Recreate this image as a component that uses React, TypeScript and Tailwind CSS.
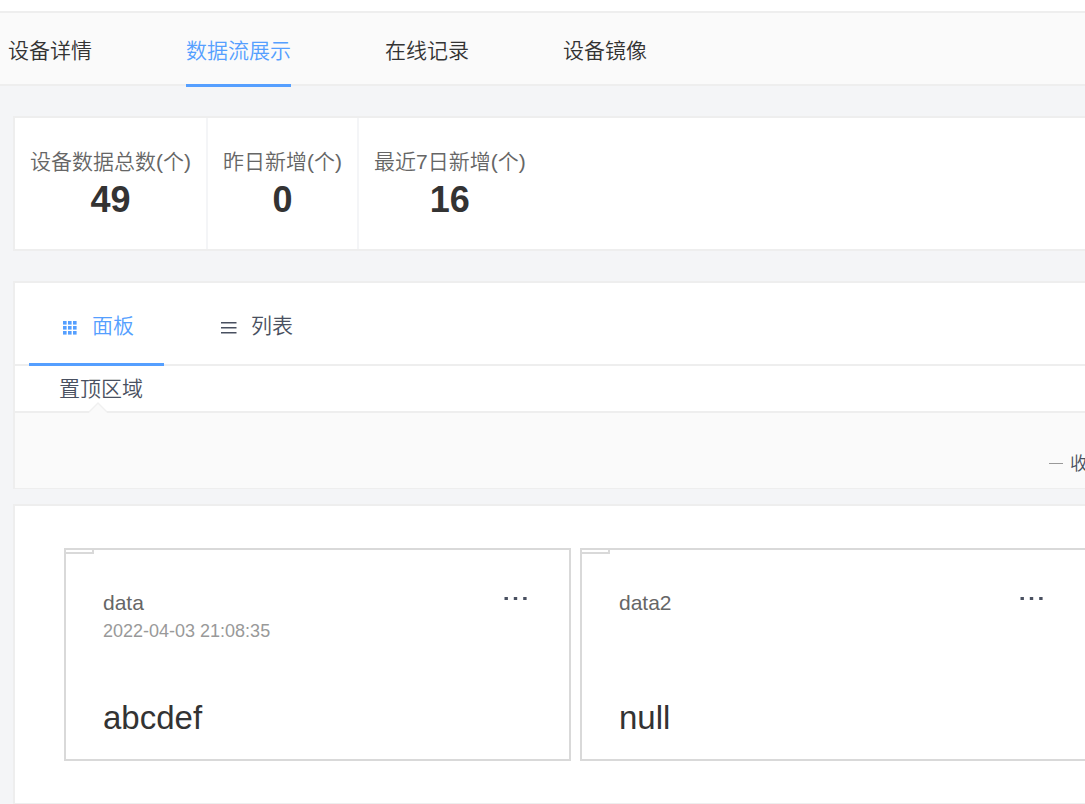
import { useState } from 'react';

const navTabs = ['设备详情', '数据流展示', '在线记录', '设备镜像'];

const stats = [
  { label: '设备数据总数(个)', value: 49 },
  { label: '昨日新增(个)', value: 0 },
  { label: '最近7日新增(个)', value: 16 },
];

const streams = [
  { name: 'data', time: '2022-04-03 21:08:35', value: 'abcdef' },
  { name: 'data2', time: '', value: 'null' },
];

function GridIcon() {
  const cells = [4, 9, 14];
  return (
    <svg width="21" height="21" viewBox="0 0 21 21" fill="currentColor" aria-hidden="true">
      {cells.map((y) => cells.map((x) => <rect key={`${x}-${y}`} x={x} y={y + 1} width="3.6" height="3.6" />))}
    </svg>
  );
}

function ListIcon() {
  return (
    <svg width="21" height="21" viewBox="0 0 21 21" fill="currentColor" aria-hidden="true">
      <rect x="3" y="6" width="15.5" height="1.5" />
      <rect x="3" y="11" width="15.5" height="1.5" />
      <rect x="3" y="16" width="15.5" height="1.5" />
    </svg>
  );
}

function DotsIcon() {
  return (
    <svg width="24" height="4" viewBox="0 0 24 4" fill="currentColor" aria-hidden="true">
      <rect x="0.5" y="0" width="3.4" height="3" />
      <rect x="9.8" y="0" width="3.4" height="3" />
      <rect x="19.2" y="0" width="3.4" height="3" />
    </svg>
  );
}

function StreamCard({ name, time, value }: { name: string; time: string; value: string }) {
  return (
    <article className="border-2 border-[#d9d9d9] bg-white">
      <div className="h-1 w-7 border-r-2 border-b-2 border-[#d9d9d9]" />
      <div className="px-[37px] pt-[35px] pb-[21px]">
        <div className="flex items-start justify-between">
          <h3 className="text-[21px] leading-7 text-[#666]">{name}</h3>
          <button type="button" aria-label="更多" className="mr-1 flex h-5 items-center text-[#495060]">
            <DotsIcon />
          </button>
        </div>
        <p className="h-7 text-[18px] leading-7 text-[#999]">{time}</p>
        <p className="mt-[53px] text-[33px] leading-10 text-[#333]">{value}</p>
      </div>
    </article>
  );
}

export default function App() {
  const [page, setPage] = useState('数据流展示');
  const [view, setView] = useState('panel');
  const [open, setOpen] = useState(true);

  const viewClass = (name: string) =>
    view === name
      ? 'border-[#559fff] text-[#559fff]'
      : 'border-transparent text-[#495060]';

  return (
    <div className="min-h-screen overflow-hidden bg-[#f4f5f7] font-['Liberation_Sans','Noto_Sans_CJK_SC',sans-serif] text-[21px] font-[350]">
      <div className="h-[11px] bg-white" />
      <nav className="flex gap-[94px] border-y-2 border-[#eee] bg-[#fafafa] pl-2">
        {navTabs.map((tab) => (
          <button
            key={tab}
            type="button"
            onClick={() => setPage(tab)}
            className={`-mb-[3px] h-[74px] shrink-0 border-b-[3px] pt-[5px] leading-8 ${
              page === tab ? 'border-[#559fff] text-[#559fff]' : 'border-transparent text-[#333]'
            }`}
          >
            {tab}
          </button>
        ))}
      </nav>

      {/* The content area runs past the right edge of the window. */}
      <main className="-mr-9 pt-[30px] pl-[13px]">
        <section className="flex border-2 border-[#eee] bg-white">
          {stats.map((s) => (
            <div
              key={s.label}
              className="flex h-[131px] flex-col items-center border-r-2 border-[#f4f5f7] px-[15px] pt-7 last:border-r-0"
            >
              <span className="leading-8 text-[#666]">{s.label}</span>
              <strong className="text-[36px] leading-[44px] font-bold text-[#333]">{s.value}</strong>
            </div>
          ))}
        </section>

        <section className="mt-[30px] border-2 border-b border-[#eee] bg-white">
          <div className="flex gap-6 border-b-2 border-[#eee] pl-[14px]">
            <button
              type="button"
              onClick={() => setView('panel')}
              className={`-mb-[2px] flex h-[83px] items-center gap-3 border-b-[3px] px-[30px] pt-[6px] ${viewClass('panel')}`}
            >
              <GridIcon />
              面板
            </button>
            <button
              type="button"
              onClick={() => setView('list')}
              className={`-mb-[2px] flex h-[83px] items-center gap-3 border-b-[3px] px-[30px] pt-[6px] ${viewClass('list')}`}
            >
              <ListIcon />
              列表
            </button>
          </div>
          <div className="relative border-b-2 border-[#eee] pl-11">
            <h2 className="leading-[45px] text-[#495060]">置顶区域</h2>
            <svg
              className="absolute -bottom-[2px] left-[74px]"
              width="18"
              height="11"
              viewBox="0 0 18 11"
              aria-hidden="true"
            >
              <path d="M0 11 L0 10.5 L9 1 L18 10.5 L18 11 Z" fill="#fafafa" />
              <path d="M0 10 L9 1 L18 10" fill="none" stroke="#f0f0f0" strokeWidth="1.4" />
            </svg>
          </div>
          <div className="flex h-[75px] justify-end bg-[#fafafa] pt-[35px] pr-[13px]">
            <button
              type="button"
              onClick={() => setOpen(!open)}
              className="flex h-8 items-center gap-[7px] text-[18px] text-[#495060]"
            >
              <svg width="14" height="14" viewBox="0 0 14 14" aria-hidden="true">
                <path d={open ? 'M0 6.5 H14' : 'M0 6.5 H14 M7 0 V14'} stroke="#999" />
              </svg>
              {open ? '收起' : '展开'}
            </button>
          </div>
        </section>

        <section className="mt-[15px] grid grid-cols-2 gap-[9px] border-2 border-b border-[#eee] bg-white pt-[42px] pr-8 pb-[42px] pl-[49px]">
          {streams.map((s) => (
            <StreamCard key={s.name} {...s} />
          ))}
        </section>
      </main>
    </div>
  );
}
